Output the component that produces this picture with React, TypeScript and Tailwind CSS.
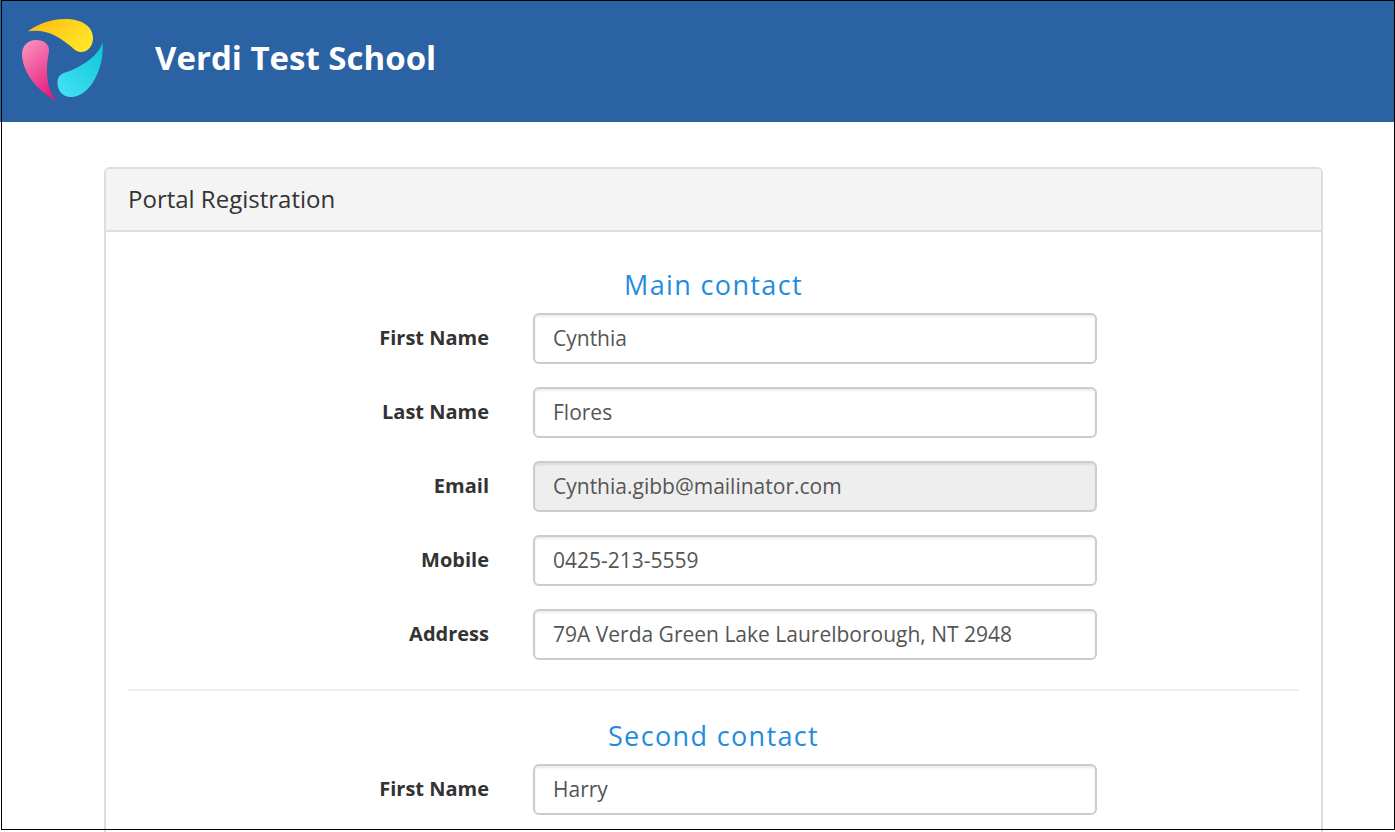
import React, { useState } from 'react';

interface Field {
  id: string;
  label: string;
  value: string;
  type?: string;
  readOnly?: boolean;
}

interface ContactSectionProps {
  title: string;
  fields: Field[];
}

const mainContact: Field[] = [
  { id: 'main-first-name', label: 'First Name', value: 'Cynthia' },
  { id: 'main-last-name', label: 'Last Name', value: 'Flores' },
  { id: 'main-email', label: 'Email', value: 'Cynthia.gibb@mailinator.com', type: 'email', readOnly: true },
  { id: 'main-mobile', label: 'Mobile', value: '0425-213-5559', type: 'tel' },
  { id: 'main-address', label: 'Address', value: '79A Verda Green Lake Laurelborough, NT 2948' },
];

const secondContact: Field[] = [
  { id: 'second-first-name', label: 'First Name', value: 'Harry' },
];

const Logo: React.FC = () => (
  <svg className="w-[84px] h-[84px] shrink-0" viewBox="21 17 84 84" aria-hidden="true">
    <defs>
      <linearGradient id="petal-yellow" x1="0" y1="0" x2="1" y2="0.6">
        <stop offset="0" stopColor="#fdb913" />
        <stop offset="1" stopColor="#ffe525" />
      </linearGradient>
      <linearGradient id="petal-pink" x1="0.2" y1="0" x2="0.7" y2="1">
        <stop offset="0" stopColor="#f88fbb" />
        <stop offset="1" stopColor="#e6187d" />
      </linearGradient>
      <linearGradient id="petal-cyan" x1="0.1" y1="1" x2="1" y2="0.1">
        <stop offset="0" stopColor="#45e0f5" />
        <stop offset="1" stopColor="#0fc8d6" />
      </linearGradient>
    </defs>
    <path
      fill="url(#petal-yellow)"
      d="M28 31.500C36 25 50 19 65 19C83 19 93 27 93 38C93 46 88 52 81 52C77 52 74.500 49.500 71 46.500C58 36 45 28.500 28 31.500Z"
    />
    <path
      fill="url(#petal-pink)"
      d="M57 101C38 92 22 72 22 54C22 46 28 40 36 40C44 40 49 44 49 50C49 54 47 59 47 70C47 84 50 94 57 101Z"
    />
    <path
      fill="url(#petal-cyan)"
      d="M102.500 42C105 66 91 97 71 97C63 97 57.500 91 57.500 83C57.500 77 60 74 65 72.500C78 68.500 99 57 102.500 42Z"
    />
  </svg>
);

const FieldRow: React.FC<{ field: Field }> = ({ field }) => {
  const [value, setValue] = useState(field.value);

  return (
    <div className="grid grid-cols-12">
      <label
        htmlFor={field.id}
        className="col-span-4 pr-[22px] pt-[10px] text-right text-[20px] leading-[30px] font-bold text-[#333333]"
      >
        {field.label}
      </label>
      <div className="col-span-6 px-[22px]">
        <input
          id={field.id}
          type={field.type || 'text'}
          value={value}
          readOnly={field.readOnly}
          onChange={(e) => setValue(e.target.value)}
          className={`block w-full h-[51px] px-[18px] pb-[2px] border-2 border-[#cccccc] rounded-md text-[21px] text-[#555555] shadow-[inset_0_2px_2px_rgba(0,0,0,0.075)] focus:outline-none focus:border-[#66afe9] ${
            field.readOnly ? 'bg-[#eeeeee]' : 'bg-white'
          }`}
        />
      </div>
    </div>
  );
};

const ContactSection: React.FC<ContactSectionProps> = ({ title, fields }) => (
  <section>
    <h3 className="mb-[9px] text-center text-[27px] leading-[38px] tracking-wider text-[#1f8ce0]">
      {title}
    </h3>
    <div className="space-y-[23px]">
      {fields.map((field) => (
        <FieldRow key={field.id} field={field} />
      ))}
    </div>
  </section>
);

const App: React.FC = () => {
  return (
    <div className="relative h-screen overflow-hidden bg-white font-['Open_Sans',sans-serif]">
      <header className="flex items-start gap-[50px] h-[122px] pt-[17px] px-[21px] bg-[#2a62a3]">
        <Logo />
        <h1 className="text-[33px] leading-[82px] font-bold text-white">Verdi Test School</h1>
      </header>

      <main className="pt-[45px] pl-[104px] pr-[72px]">
        <div className="border-2 border-[#dddddd] rounded-md pb-12">
          <div className="px-[22px] pt-[13px] pb-[14px] border-b-2 border-[#dddddd] rounded-t-sm bg-[#f4f4f4]">
            <h2 className="text-[24px] leading-[34px] font-medium text-[#333333]">Portal Registration</h2>
          </div>
          <form className="pt-[34px]" onSubmit={(e) => e.preventDefault()}>
            <ContactSection title="Main contact" fields={mainContact} />
            <hr className="mx-[22px] mt-[29px] mb-[26px] border-t-2 border-[#eeeeee]" />
            <ContactSection title="Second contact" fields={secondContact} />
          </form>
        </div>
      </main>

      {/* page outline */}
      <div className="pointer-events-none absolute top-0 right-0 bottom-[2px] left-px border border-black" />
    </div>
  );
};

export default App;
